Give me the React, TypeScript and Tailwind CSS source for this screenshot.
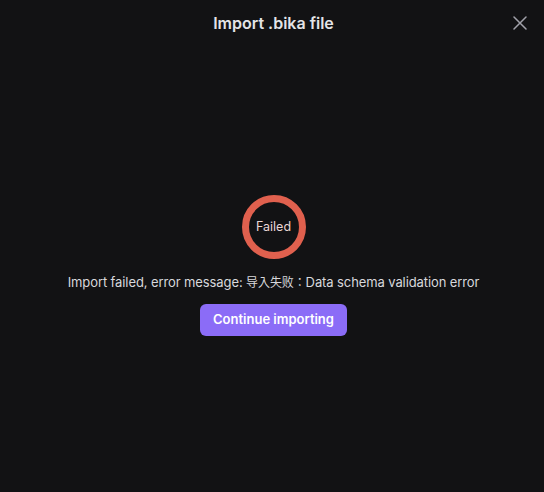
import React from "react";

export default function App() {
  return (
    <div
      className="w-[544px] h-[492px] bg-[#121214] flex flex-col overflow-hidden pl-[3px]"
      style={{ fontFamily: 'Inter, "Noto Sans CJK SC", sans-serif' }}
    >
      <div className="relative h-[46px] flex items-center justify-center">
        <span className="text-[16px] font-semibold text-[#e4e4e7]">Import .bika file</span>
        <button className="absolute right-[16px] top-[15px] w-[16px] h-[16px] flex items-center justify-center text-[#a1a1aa]">
          <svg width="14" height="14" viewBox="0 0 14 14" fill="none">
            <path d="M1 1L13 13M13 1L1 13" stroke="currentColor" strokeWidth="1.5" strokeLinecap="round" />
          </svg>
        </button>
      </div>
      <div className="flex flex-col items-center pt-[149px]">
        <div className="w-[64px] h-[64px] rounded-full border-[7px] border-[#e0604e] flex items-center justify-center">
          <span className="text-[12.5px] text-[#ead6d6]">Failed</span>
        </div>
        <p className="mt-[14px] text-[13px] leading-[18px] tracking-[-0.1px] text-[#d8d8dc]">
          Import failed, error message:{" "}
          <span
            className="text-[12px]"
            style={{ fontFamily: '"Noto Sans CJK JP", "Noto Sans CJK SC", sans-serif' }}
          >
            导入失败：
          </span>
          Data schema validation error
        </p>
        <button className="mt-[13px] h-[32px] px-[13px] rounded-[6px] bg-[#8b6cf7] text-white text-[13px] font-semibold">
          Continue importing
        </button>
      </div>
    </div>
  );
}
